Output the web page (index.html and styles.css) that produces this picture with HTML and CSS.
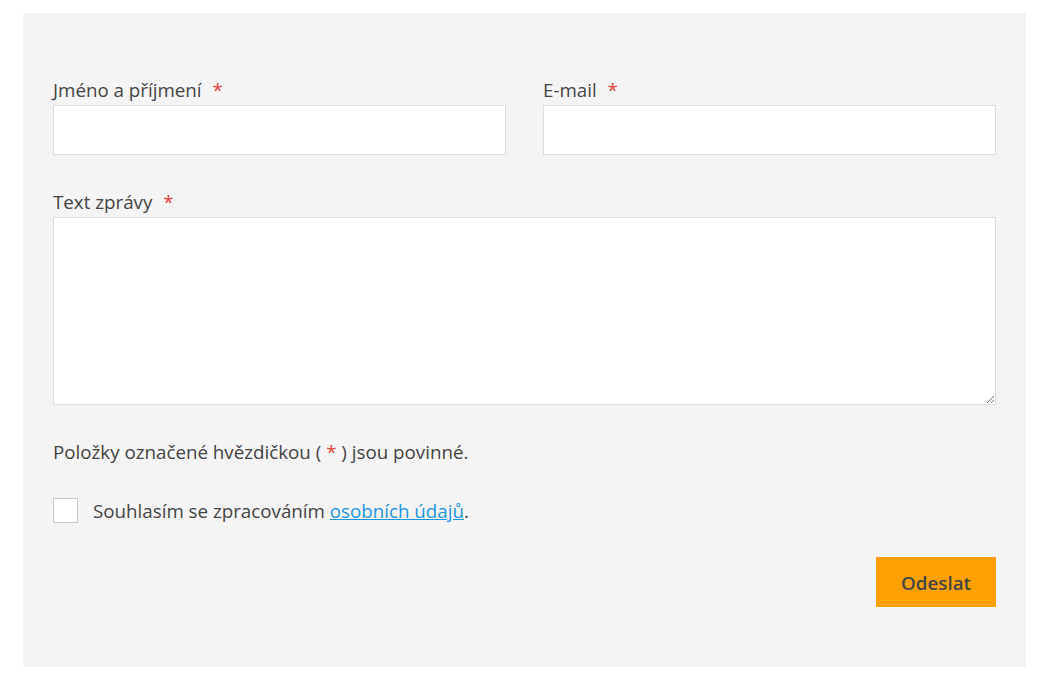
FILE: index.html
```html
<!DOCTYPE html>
<html lang="cs">
<head>
<meta charset="utf-8">
<link rel="stylesheet" href="styles.css">
</head>
<body>
<div class="page">
  <form class="panel">
    <div class="row">
      <div class="field">
        <label class="label">Jméno a příjmení <span class="req">*</span></label>
        <input class="input" type="text">
      </div>
      <div class="field">
        <label class="label">E-mail <span class="req">*</span></label>
        <input class="input" type="text">
      </div>
    </div>
    <div class="field">
      <label class="label">Text zprávy <span class="req">*</span></label>
      <textarea class="textarea"></textarea>
    </div>
    <p class="note">Položky označené hvězdičkou ( <span class="req-inline">*</span> ) jsou povinné.</p>
    <label class="consent">
      <input class="check" type="checkbox">
      <span>Souhlasím se zpracováním <a class="link" href="#">osobních údajů</a>.</span>
    </label>
    <div class="actions">
      <button class="submit" type="button">Odeslat</button>
    </div>
  </form>
</div>
</body>
</html>
```
FILE: styles.css
```css
* { box-sizing: border-box; }
html, body { margin: 0; padding: 0; background: #fff; }
body {
  font-family: "Open Sans", "Liberation Sans", sans-serif;
  font-size: 18.75px;
  line-height: 27px;
  color: #444;
}
.page {
  padding: 13px 26px 19px 23px;
}
.panel {
  background: #f4f4f4;
  padding: 63px 30px 60px 30px;
  display: flex;
  flex-direction: column;
}
.row {
  display: grid;
  grid-template-columns: 1fr 1fr;
  column-gap: 37px;
  margin-bottom: 33px;
}
.field {
  display: flex;
  flex-direction: column;
}
.label {
  display: block;
  margin-bottom: 2px;
}
.req {
  color: #e2403d;
  margin-left: 6px;
}
.req-inline { color: #e2403d; }
.input {
  height: 50px;
  border: 1px solid #dcdcdc;
  background: #fff;
  font: inherit;
  padding: 0 12px;
  outline: none;
}
.textarea {
  height: 188px;
  border: 1px solid #dcdcdc;
  background: #fff;
  font: inherit;
  padding: 10px 12px;
  resize: vertical;
  outline: none;
  display: block;
}
.note {
  margin: 33px 0 0 0;
}
.consent {
  display: flex;
  align-items: center;
  gap: 15px;
  margin-top: 32px;
}
.check {
  appearance: none;
  -webkit-appearance: none;
  width: 25px;
  height: 25px;
  margin: 0;
  background: #fff;
  border: 1px solid #c8c8c8;
  flex: none;
}
.link {
  color: #1e96e0;
  text-decoration: underline;
}
.actions {
  display: flex;
  justify-content: flex-end;
  margin-top: 33px;
}
.submit {
  width: 120px;
  height: 50px;
  border: none;
  background: #ffa000;
  color: #444;
  font-family: inherit;
  font-size: 18.75px;
  font-weight: 600;
  cursor: pointer;
}
```
